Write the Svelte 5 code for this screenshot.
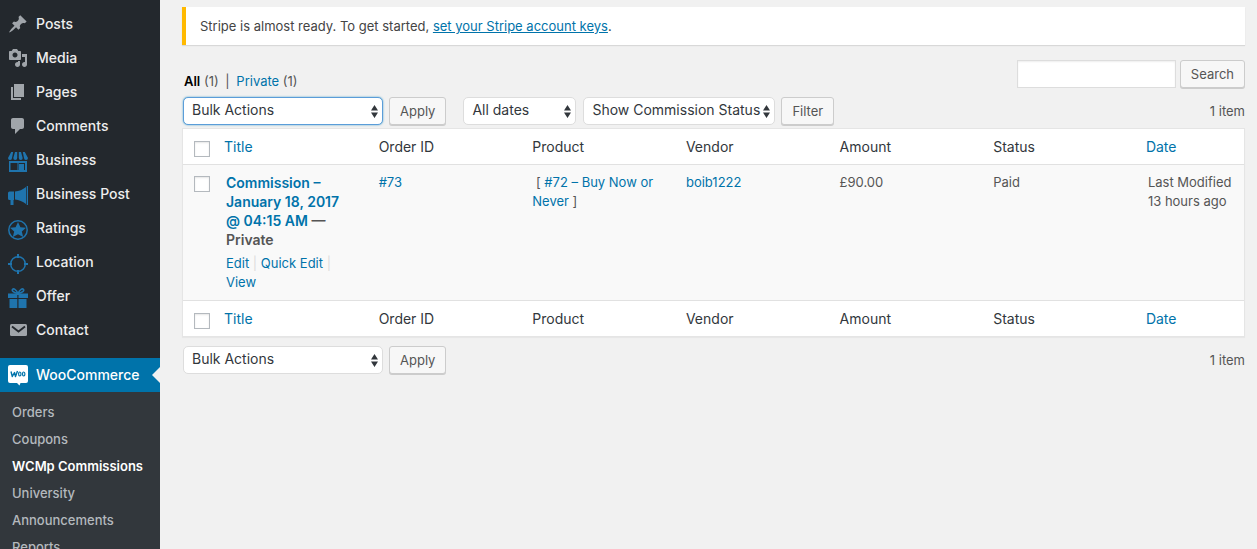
<script>
  const menu = [
    { label: 'Posts', icon: 'post' },
    { label: 'Media', icon: 'media' },
    { label: 'Pages', icon: 'page' },
    { label: 'Comments', icon: 'comment' },
    { label: 'Business', icon: 'store' },
    { label: 'Business Post', icon: 'horn' },
    { label: 'Ratings', icon: 'star' },
    { label: 'Location', icon: 'target' },
    { label: 'Offer', icon: 'gift' },
    { label: 'Contact', icon: 'mail' }
  ];
  const submenu = ['Orders', 'Coupons', 'WCMp Commissions', 'University', 'Announcements', 'Reports'];
  const current = 'WCMp Commissions';
  const columns = ['Title', 'Order ID', 'Product', 'Vendor', 'Amount', 'Status', 'Date'];
  const sortable = ['Title', 'Date'];
  const glyphs = {
    post: 'M10.44 3.02l1.82-1.82 6.36 6.35-1.83 1.82c-1.05-.68-2.48-.57-3.41.36l-.75.75c-.92.93-1.04 2.35-.35 3.41l-1.83 1.82-2.41-2.41-2.8 2.79c-.42.42-3.38 2.71-3.8 2.29s1.86-3.39 2.28-3.81l2.79-2.79L4.1 9.36l1.83-1.82c1.05.69 2.48.57 3.4-.36l.75-.75c.93-.92 1.05-2.35.36-3.41z',
    media: 'M13 11V4c0-.55-.45-1-1-1h-1.67L9 1H5L3.67 3H2c-.55 0-1 .45-1 1v7c0 .55.45 1 1 1h10c.55 0 1-.45 1-1zM7 4.5c1.38 0 2.5 1.12 2.5 2.5S8.38 9.5 7 9.5 4.5 8.38 4.5 7 5.62 4.5 7 4.5zM14 6h5v10.5c0 1.38-1.12 2.5-2.5 2.5S14 17.88 14 16.5s1.12-2.5 2.5-2.5c.17 0 .34.02.5.05V9h-3V6zm-4 8.05V13h2v3.5c0 1.38-1.12 2.5-2.5 2.5S7 17.88 7 16.5 8.12 14 9.5 14c.17 0 .34.02.5.05z',
    page: 'M6 15V2h10v13H6zm-1 1h8v2H3V5h2v11z',
    comment: 'M5 2h9c1.1 0 2 .9 2 2v7c0 1.1-.9 2-2 2h-2l-5 5v-5H5c-1.1 0-2-.9-2-2V4c0-1.1.9-2 2-2z'
  };
  const custom = ['store', 'horn', 'star', 'target', 'gift'];
</script>

{#snippet icon(name)}
  <svg class="icon" class:custom={custom.includes(name)} viewBox="0 0 20 20" aria-hidden="true">
    {#if glyphs[name]}
      <path d={glyphs[name]} />
    {:else if name === 'store'}
      <path d="M3.2 0h2L4 6a1.9 1.9 0 0 1-4 0zM7 0h2.200v6a1.700 1.700 0 0 1-3.900 0zM10.800 0H13l1.700 6a1.700 1.700 0 0 1-3.900 0zM14.800 0h2L20 6a1.900 1.900 0 0 1-4 0z" />
      <path fill-rule="evenodd" d="M1 9h18v11H1zM2.500 11V18h7v-7zM10.500 11V18h6.500v-7z" />
      <path d="M11 12h5v7h-5z" />
    {:else if name === 'horn'}
      <path d="M1.500 5.500H6v8.500h-.5v5h-3V14h-1Q0 14 0 12.500V7q0-1.500 1.500-1.500zM7 5.500q6-.5 11-4.500v17q-5-4-11-4.500zM18.700 0H20v19h-1.300z" />
    {:else if name === 'star'}
      <circle cx="10" cy="10" r="9.200" fill="none" stroke="currentColor" stroke-width="1.500" />
      <path d="M10 2l2.400 5.200 5.600.5-4.200 3.800 1.400 5.600-5.200-2.900-5.200 2.900 1.400-5.600L2 7.700l5.600-.5z" />
    {:else if name === 'target'}
      <circle cx="10" cy="10" r="7.300" fill="none" stroke="currentColor" stroke-width="1.500" />
      <path d="M9 0h2v4H9zM9 16h2v4H9zM0 9h4v2H0zM16 9h4v2h-4z" />
    {:else if name === 'gift'}
      <path d="M10 5.500C8 1 5.500.3 4.500 1.500S5.500 4.800 10 5.500C12 1 14.500.3 15.500 1.500S14.500 4.800 10 5.500z" fill="none" stroke="currentColor" stroke-width="1.600" />
      <path d="M0 5.500h20v4.500H0zM1.500 11h7.800v9H1.500zM10.500 11h8v9h-8z" />
      <path d="M9.300 7h1.200v4H9.300z" fill="#23282d" />
    {:else if name === 'mail'}
      <rect x="2" y="4" width="17" height="12" rx="1.500" />
      <path d="M4 6.500l6.500 5 6.500-5" fill="none" stroke="#23282d" stroke-width="1.800" />
    {:else if name === 'woo'}
      <path d="M2 0h16q2 0 2 2v14q0 2-2 2h-5.500l-1 2.500L9 18H2q-2 0-2-2V2q0-2 2-2z" />
      <path d="M3 6.500l1.300 5L6.500 7.500l1 4L9.500 6" fill="none" stroke="#0073aa" stroke-width="1.400" stroke-linejoin="round" />
      <ellipse cx="11.800" cy="9" rx="1.200" ry="2" fill="none" stroke="#0073aa" stroke-width="1.200" />
      <ellipse cx="15.700" cy="9" rx="1.200" ry="2" fill="none" stroke="#0073aa" stroke-width="1.200" />
    {/if}
  </svg>
{/snippet}

{#snippet bulk(id, focused)}
  <select {id} class="wide" class:focused aria-label="Select bulk action">
    <option>Bulk Actions</option>
    <option>Edit</option>
  </select>
  <button type="button">Apply</button>
{/snippet}

{#snippet headings()}
  <tr>
    <th class="check"><input type="checkbox" aria-label="Select all" /></th>
    {#each columns as col}
      <th scope="col" class:sortable={sortable.includes(col)} class:date={col === 'Date'}>
        {#if sortable.includes(col)}<a href="#sort">{col}</a>{:else}{col}{/if}
      </th>
    {/each}
  </tr>
{/snippet}

<div class="shell">
  <nav class="sidebar" aria-label="Main menu">
    <ul class="menu">
      {#each menu as item}
        <li><a href="#menu">{@render icon(item.icon)}<span>{item.label}</span></a></li>
      {/each}
      <li class="active"><a href="#woocommerce">{@render icon('woo')}<span>WooCommerce</span></a></li>
    </ul>
    <ul class="submenu">
      {#each submenu as label}
        <li><a href="#submenu" class:current={label === current}>{label}</a></li>
      {/each}
    </ul>
  </nav>

  <main>
    <div class="notice">
      <p>Stripe is almost ready. To get started, <a href="#stripe">set your Stripe account keys</a>.</p>
    </div>

    <div class="top">
      <div class="views">
        <a href="#all" class="all">All</a> <span>(1)</span>
        <span class="bar">|</span>
        <a href="#private">Private</a> <span>(1)</span>
      </div>
      <form class="search">
        <input type="search" aria-label="Search commissions" />
        <button type="button">Search</button>
      </form>
    </div>

    <div class="tablenav">
      {@render bulk('bulk-top', true)}
      <select class="dates" aria-label="Filter by date"><option>All dates</option></select>
      <select class="status" aria-label="Filter by commission status"><option>Show Commission Status</option></select>
      <button type="button">Filter</button>
      <span class="count">1 item</span>
    </div>

    <table>
      <thead>{@render headings()}</thead>
      <tbody>
        <tr>
          <td class="check"><input type="checkbox" aria-label="Select commission" /></td>
          <td class="title">
            <strong><a href="#commission">Commission – January 18, 2017 @ 04:15 AM</a> — Private</strong>
            <div class="actions">
              <a href="#edit">Edit</a> <i>|</i> <a href="#quick">Quick Edit</a> <i>|</i> <a href="#view">View</a>
            </div>
          </td>
          <td><a href="#order">#73</a></td>
          <td>&nbsp;[ <a href="#product">#72 – Buy Now or Never</a> ]</td>
          <td><a href="#vendor">boib1222</a></td>
          <td>£90.00</td>
          <td>Paid</td>
          <td class="date">Last Modified<br />13 hours ago</td>
        </tr>
      </tbody>
      <tfoot>{@render headings()}</tfoot>
    </table>

    <div class="tablenav bottom">
      {@render bulk('bulk-bottom', false)}
      <span class="count">1 item</span>
    </div>
  </main>
</div>

<style>
  :global(body) {
    background: #f1f1f1;
  }
  .shell {
    display: flex;
    min-height: 100vh;
    color: #555;
    font: 13px/19px Inter, 'Open Sans', sans-serif;
  }
  .shell * {
    box-sizing: border-box;
  }
  a {
    color: #0073aa;
    text-decoration: none;
  }
  ul {
    list-style: none;
    margin: 0;
    padding: 0;
  }
  .sidebar {
    flex: 0 0 160px;
    height: 100vh;
    overflow: hidden;
    padding-top: 7px;
    background: #23282d;
  }
  .menu a {
    display: flex;
    align-items: center;
    gap: 8px;
    height: 34px;
    padding-left: 8px;
    color: #eee;
    font-size: 14px;
    font-weight: 500;
    white-space: nowrap;
  }
  .menu span {
    padding-bottom: 2px;
  }
  .icon {
    flex: none;
    width: 20px;
    height: 20px;
    color: #a0a5aa;
    fill: currentColor;
    overflow: visible;
  }
  .icon.custom {
    color: #1f74ad;
    margin-top: 4px;
  }
  .menu .active {
    position: relative;
    margin-top: 11px;
    background: #0073aa;
  }
  .active a,
  .active .icon {
    color: #fff;
  }
  .active::after {
    content: '';
    position: absolute;
    top: 9px;
    right: 0;
    border: 8px solid transparent;
    border-left: 0;
    border-right-color: #f1f1f1;
  }
  .submenu {
    height: 100%;
    padding-top: 7px;
    background: #32373c;
  }
  .submenu a {
    display: block;
    padding-left: 12px;
    color: #b4b9be;
    font-weight: 500;
    line-height: 27px;
  }
  .submenu .current {
    color: #fff;
    font-weight: 600;
  }
  main {
    flex: 1;
    min-width: 0;
    padding: 7px 12px 0 22px;
  }
  .notice {
    padding: 0 12px 0 14px;
    border-left: 4px solid #ffb900;
    background: #fff;
    box-shadow: 0 1px 1px rgba(0, 0, 0, 0.1);
    color: #444;
  }
  .notice p {
    margin: 0;
    padding: 10px 0 9px;
  }
  .notice a {
    text-decoration: underline;
  }
  .top {
    display: flex;
    justify-content: space-between;
    padding-top: 15px;
  }
  .views {
    padding: 12px 0 0 2px;
  }
  .all {
    color: #000;
    font-weight: 600;
  }
  .bar {
    margin: 0 3px;
  }
  .search {
    display: flex;
    gap: 4px;
  }
  .search input {
    width: 159px;
    height: 28px;
    margin: 0;
    border: 1px solid #ddd;
    background: #fff;
    box-shadow: inset 0 1px 2px rgba(0, 0, 0, 0.07);
  }
  .tablenav {
    display: flex;
    align-items: center;
    padding: 6px 0 3px 1px;
  }
  button {
    height: 28px;
    padding: 0 10px;
    border: 1px solid #ccc;
    border-radius: 3px;
    background: #f7f7f7;
    box-shadow: 0 1px 0 #ccc;
    color: #555;
    font: inherit;
    white-space: nowrap;
  }
  select {
    height: 28px;
    padding: 0 8px;
    border: 1px solid #ddd;
    border-radius: 5px;
    appearance: none;
    background: #fff
      url("data:image/svg+xml,%3Csvg xmlns='http://www.w3.org/2000/svg' width='7' height='13'%3E%3Cpath fill='%2332373c' d='M0 5.500L3.500 0 7 5.500zM0 7.500h7L3.500 13z'/%3E%3C/svg%3E")
      no-repeat right 4px center;
    color: #32373c;
    font: 14px/20px Inter, 'Open Sans', sans-serif;
  }
  .tablenav select {
    padding-bottom: 2px;
  }
  .wide {
    width: 200px;
    margin-right: 6px;
  }
  .focused {
    border-color: #5b9dd9;
    box-shadow: 0 0 2px rgba(30, 140, 190, 0.8);
  }
  .dates {
    width: 113px;
    margin: 0 7px 0 17px;
  }
  .status {
    width: 192px;
    margin-right: 6px;
  }
  .count {
    margin-left: auto;
  }
  table {
    width: 100%;
    table-layout: fixed;
    border: 1px solid #e5e5e5;
    border-spacing: 0;
    background: #fff;
    box-shadow: 0 1px 1px rgba(0, 0, 0, 0.04);
  }
  th {
    height: 36px;
    padding: 0 8px 0 9px;
    color: #32373c;
    font-size: 14px;
    font-weight: 400;
    text-align: left;
  }
  th.sortable {
    padding-left: 8px;
  }
  thead th {
    border-bottom: 1px solid #e1e1e1;
  }
  tfoot th {
    border-top: 1px solid #e1e1e1;
  }
  td {
    padding: 8px 8px 8px 9px;
    background: #f9f9f9;
    vertical-align: top;
  }
  th.check,
  td.check {
    width: 33px;
    padding: 0 0 0 11px;
  }
  td.check {
    padding-top: 11px;
  }
  th.check input {
    margin-top: 2px;
  }
  .date {
    width: 10%;
  }
  td.date {
    padding-left: 10px;
    padding-right: 0;
  }
  .check input {
    display: block;
    width: 16px;
    height: 16px;
    margin: 0;
    border: 1px solid #b4b9be;
    appearance: none;
    background: #fff;
    box-shadow: inset 0 1px 2px rgba(0, 0, 0, 0.1);
  }
  thead .check,
  tfoot .check {
    padding-top: 2px;
  }
  td.title {
    padding-left: 10px;
    padding-right: 24px;
  }
  strong {
    display: block;
    font-size: 14px;
    font-weight: 600;
  }
  .actions {
    padding-top: 5px;
    margin-right: -8px;
  }
  .actions i {
    color: #ddd;
    font-style: normal;
  }
  .bottom {
    padding-top: 9px;
  }
</style>
